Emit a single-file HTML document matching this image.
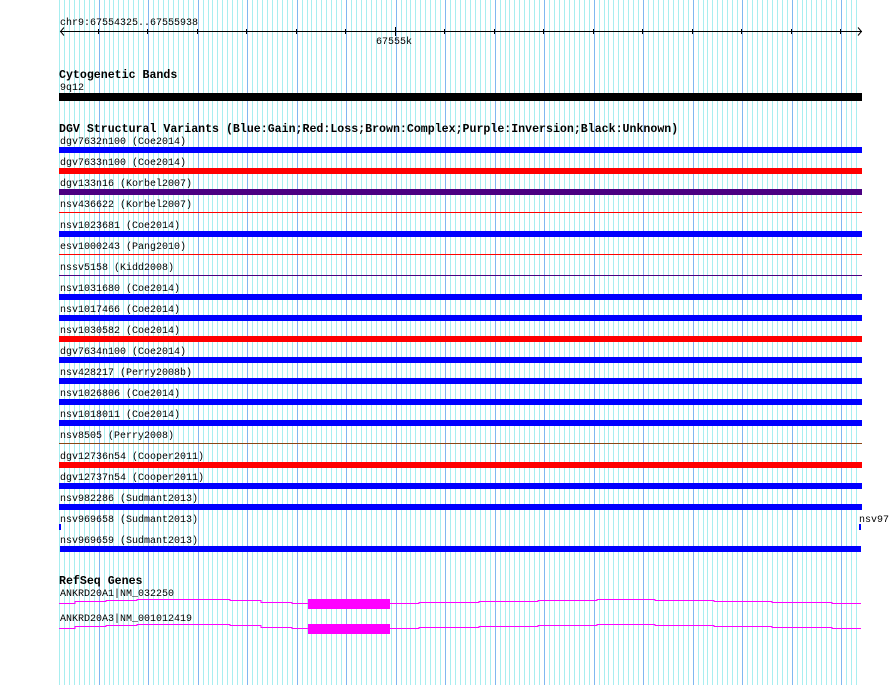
<!DOCTYPE html>
<html><head><meta charset="utf-8"><style>
html,body{margin:0;padding:0;background:#fff;width:890px;height:685px;overflow:hidden}
svg{position:absolute;left:0;top:0}
text{font-family:"Liberation Mono",monospace;font-size:10px;fill:#000}
.h{font-weight:bold;font-size:11.6px}
</style></head><body>
<svg width="890" height="685" xmlns="http://www.w3.org/2000/svg" shape-rendering="crispEdges">
<defs>
<pattern id="gp" x="59" y="0" width="99" height="685" patternUnits="userSpaceOnUse">
<g fill="#a8eef0">
<rect x="0" width="1" height="685"/><rect x="5" width="1" height="685"/><rect x="10" width="1" height="685"/><rect x="15" width="1" height="685"/><rect x="20" width="1" height="685"/><rect x="25" width="1" height="685"/><rect x="30" width="1" height="685"/><rect x="35" width="1" height="685"/><rect x="45" width="1" height="685"/><rect x="50" width="1" height="685"/><rect x="54" width="1" height="685"/><rect x="59" width="1" height="685"/><rect x="64" width="1" height="685"/><rect x="69" width="1" height="685"/><rect x="74" width="1" height="685"/><rect x="79" width="1" height="685"/><rect x="84" width="1" height="685"/><rect x="94" width="1" height="685"/>
</g>
<g fill="#80b8f0"><rect x="40" width="1" height="685"/><rect x="89" width="1" height="685"/></g>
</pattern>
</defs>
<rect x="59" y="0" width="799" height="685" fill="url(#gp)"/>

<text x="60" y="25">chr9:67554325..67555938</text>
<rect x="60" y="31" width="802" height="1" fill="#000"/>
<polyline points="64,27.5 60.5,31.5 64,35.5" fill="none" stroke="#000" shape-rendering="auto"/>
<polyline points="858,27.5 861.5,31.5 858,35.5" fill="none" stroke="#000" shape-rendering="auto"/>
<g fill="#000">
<rect x="98" y="29" width="1" height="5"/><rect x="147" y="29" width="1" height="5"/><rect x="197" y="29" width="1" height="5"/><rect x="246" y="29" width="1" height="5"/><rect x="296" y="29" width="1" height="5"/><rect x="345" y="29" width="1" height="5"/><rect x="395" y="27" width="1" height="9"/><rect x="444" y="29" width="1" height="5"/><rect x="494" y="29" width="1" height="5"/><rect x="543" y="29" width="1" height="5"/><rect x="593" y="29" width="1" height="5"/><rect x="642" y="29" width="1" height="5"/><rect x="692" y="29" width="1" height="5"/><rect x="741" y="29" width="1" height="5"/><rect x="791" y="29" width="1" height="5"/><rect x="840" y="29" width="1" height="5"/>
</g>
<text x="376" y="44">67555k</text>

<text class="h" x="59" y="78">Cytogenetic Bands</text>
<text x="60" y="90">9q12</text>
<rect x="59" y="93" width="803" height="8" fill="#000"/>

<text class="h" x="59" y="132">DGV Structural Variants (Blue:Gain;Red:Loss;Brown:Complex;Purple:Inversion;Black:Unknown)</text>

<text x="60" y="144">dgv7632n100 (Coe2014)</text><rect x="59" y="147" width="803" height="6" fill="#0000ff"/>
<text x="60" y="165">dgv7633n100 (Coe2014)</text><rect x="59" y="168" width="803" height="6" fill="#ff0000"/>
<text x="60" y="186">dgv133n16 (Korbel2007)</text><rect x="59" y="189" width="803" height="6" fill="#4b0082"/>
<text x="60" y="207">nsv436622 (Korbel2007)</text><rect x="59" y="212" width="803" height="1" fill="#ff0000"/>
<text x="60" y="228">nsv1023681 (Coe2014)</text><rect x="59" y="231" width="803" height="6" fill="#0000ff"/>
<text x="60" y="249">esv1000243 (Pang2010)</text><rect x="59" y="254" width="803" height="1" fill="#ff0000"/>
<text x="60" y="270">nssv5158 (Kidd2008)</text><rect x="59" y="275" width="803" height="1" fill="#4b0082"/>
<text x="60" y="291">nsv1031680 (Coe2014)</text><rect x="59" y="294" width="803" height="6" fill="#0000ff"/>
<text x="60" y="312">nsv1017466 (Coe2014)</text><rect x="59" y="315" width="803" height="6" fill="#0000ff"/>
<text x="60" y="333">nsv1030582 (Coe2014)</text><rect x="59" y="336" width="803" height="6" fill="#ff0000"/>
<text x="60" y="354">dgv7634n100 (Coe2014)</text><rect x="59" y="357" width="803" height="6" fill="#0000ff"/>
<text x="60" y="375">nsv428217 (Perry2008b)</text><rect x="59" y="378" width="803" height="6" fill="#0000ff"/>
<text x="60" y="396">nsv1026806 (Coe2014)</text><rect x="59" y="399" width="803" height="6" fill="#0000ff"/>
<text x="60" y="417">nsv1018011 (Coe2014)</text><rect x="59" y="420" width="803" height="6" fill="#0000ff"/>
<text x="60" y="438">nsv8505 (Perry2008)</text><rect x="59" y="443" width="803" height="1" fill="#8b4513"/>
<text x="60" y="459">dgv12736n54 (Cooper2011)</text><rect x="59" y="462" width="803" height="6" fill="#ff0000"/>
<text x="60" y="480">dgv12737n54 (Cooper2011)</text><rect x="59" y="483" width="803" height="6" fill="#0000ff"/>
<text x="60" y="501">nsv982286 (Sudmant2013)</text><rect x="59" y="504" width="803" height="6" fill="#0000ff"/>
<text x="60" y="522">nsv969658 (Sudmant2013)</text><rect x="59" y="524" width="2" height="6" fill="#0000ff"/>
<text x="859" y="522">nsv97</text><rect x="859" y="524" width="2" height="6" fill="#0000ff"/>
<text x="60" y="543">nsv969659 (Sudmant2013)</text><rect x="60" y="546" width="801" height="6" fill="#0000ff"/>

<text class="h" x="59" y="584">RefSeq Genes</text>
<text x="60" y="596">ANKRD20A1|NM_032250</text>
<g fill="none" stroke="#ff00ff" stroke-width="1">
<polyline points="59,603.5 75,603.5 75,601.5 106,601.5 106,600.5 137,600.5 137,599.5 230,599.5 230,600.5 261,600.5 261,602.5 292,602.5 292,603.5 308,603.5"/>
<polyline points="390,603.5 419,603.5 419,602.5 479,602.5 479,601.5 538,601.5 538,600.5 597,600.5 597,599.5 655,599.5 655,600.5 714,600.5 714,601.5 772,601.5 772,602.5 832,602.5 832,603.5 861,603.5"/>
</g>
<rect x="308" y="599" width="82" height="10" fill="#ff00ff"/>
<text x="60" y="621">ANKRD20A3|NM_001012419</text>
<g fill="none" stroke="#ff00ff" stroke-width="1" transform="translate(0,25)">
<polyline points="59,603.5 75,603.5 75,601.5 106,601.5 106,600.5 137,600.5 137,599.5 230,599.5 230,600.5 261,600.5 261,602.5 292,602.5 292,603.5 308,603.5"/>
<polyline points="390,603.5 419,603.5 419,602.5 479,602.5 479,601.5 538,601.5 538,600.5 597,600.5 597,599.5 655,599.5 655,600.5 714,600.5 714,601.5 772,601.5 772,602.5 832,602.5 832,603.5 861,603.5"/>
</g>
<rect x="308" y="624" width="82" height="10" fill="#ff00ff"/>
</svg>
</body></html>
